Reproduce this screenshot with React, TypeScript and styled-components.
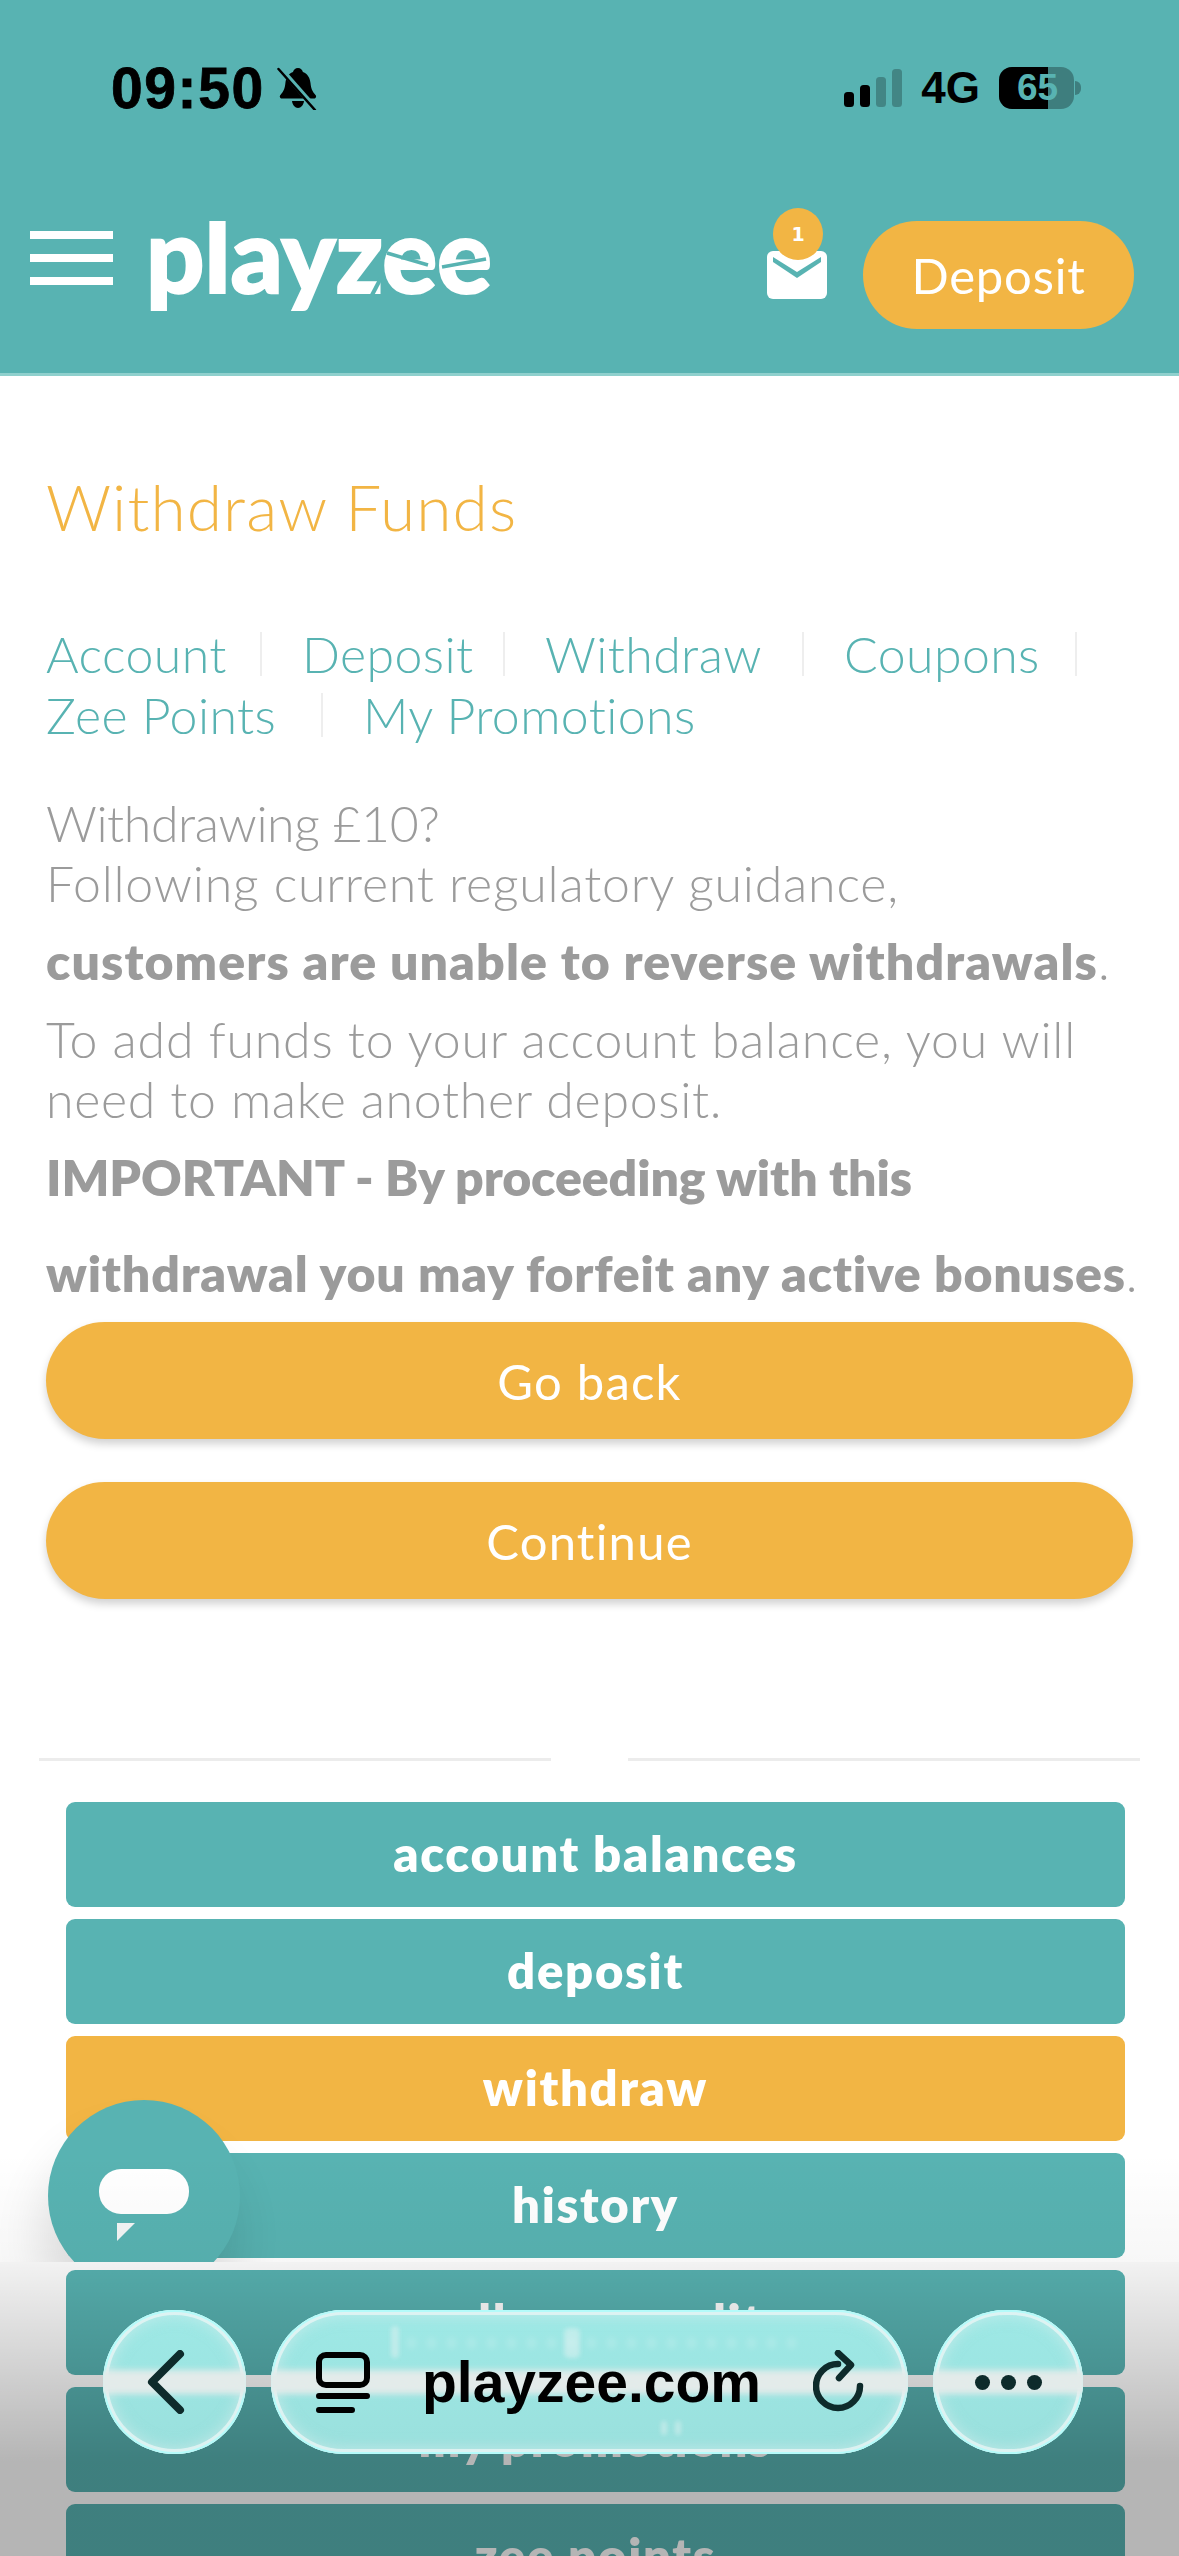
import { Fragment } from "react";
import styled, { createGlobalStyle } from "styled-components";

const teal = "#58b3b2";
const amber = "#f2b544";
const grey = "#9b9b9b";
const ink = "#0e2b2b";
const bodyFont = `"Lato", "Open Sans", sans-serif`;

const GlobalStyle = createGlobalStyle`
  html, body { margin: 0; padding: 0; background: #fff; }
  * { box-sizing: border-box; }
`;

const Page = styled.div`
  position: relative;
  width: 1179px;
  height: 2556px;
  overflow: hidden;
  background: #fff;
  font-family: ${bodyFont};
`;

const Header = styled.header`
  background: ${teal};
  height: 376px;
  border-bottom: 3px solid #8fd0cd;
`;
const StatusBar = styled.div`
  display: flex;
  align-items: center;
  height: 176px;
  padding: 0 98px 0 111px;
`;
const Time = styled.span`
  font-family: "Liberation Sans", sans-serif;
  font-weight: 700;
  font-size: 57px;
  letter-spacing: 1.6px;
  color: #000;
  -webkit-text-stroke: 0.8px #000;
`;
const Spacer = styled.div`
  flex: 1;
`;
const NetworkLabel = styled.span`
  font-family: "Liberation Sans", sans-serif;
  font-weight: 700;
  font-size: 44px;
  color: #000;
  margin: 0 19px;
`;
const Battery = styled.div`
  position: relative;
  display: flex;
  align-items: center;
  justify-content: center;
  width: 75px;
  height: 42px;
  border-radius: 13px;
  overflow: hidden;
  background: #3e7e7e;
  color: ${teal};
  font-family: "Liberation Sans", sans-serif;
  font-weight: 700;
  font-size: 37px;
`;
const BatteryFill = styled.div`
  position: absolute;
  left: 0;
  top: 0;
  bottom: 0;
  width: 49px;
  background: #000;
`;
const BatteryText = styled.span`
  position: relative;
  left: 1px;
`;
const BatteryNub = styled.div`
  width: 6px;
  height: 14px;
  margin-left: 1px;
  border-radius: 0 7px 7px 0;
  background: #3e7e7e;
`;

const NavBar = styled.nav`
  display: flex;
  align-items: flex-start;
  height: 197px;
  padding: 0 45px 0 30px;
`;
const Hamburger = styled.div`
  display: flex;
  flex-direction: column;
  gap: 15px;
  width: 83px;
  margin-top: 55px;
`;
const HamburgerLine = styled.span`
  height: 8px;
  background: #fff;
`;
const Logo = styled.svg`
  margin: 45px 0 0 33px;
`;
const MailLink = styled.div`
  position: relative;
  width: 60px;
  height: 91px;
  margin-top: 32px;
  padding-top: 43px;
`;
const Badge = styled.span`
  position: absolute;
  top: 0;
  left: 6px;
  display: flex;
  align-items: center;
  justify-content: center;
  width: 50px;
  height: 52px;
  border-radius: 50%;
  background: ${amber};
  color: #fff;
  font-family: "DejaVu Sans", sans-serif;
  font-weight: 700;
  font-size: 19px;
`;
const DepositButton = styled.div`
  display: flex;
  align-items: center;
  justify-content: center;
  width: 271px;
  height: 108px;
  margin: 45px 0 0 36px;
  border-radius: 54px;
  background: ${amber};
  color: #fff;
  font-size: 49px;
  letter-spacing: 0.8px;
`;

const Content = styled.main`
  padding: 91px 46px 0;
`;
const Title = styled.h1`
  margin: 0;
  font-size: 64px;
  line-height: 80px;
  font-weight: 300;
  letter-spacing: 1.1px;
  color: ${amber};
`;
const AccountLinks = styled.div`
  margin-top: 76px;
`;
const LinkRow = styled.div`
  display: flex;
  align-items: center;
  height: 61px;
`;
const AccountLink = styled.a<{ $width: number }>`
  width: ${(p) => p.$width}px;
  white-space: nowrap;
  font-size: 50px;
  font-weight: 300;
  letter-spacing: 0.4px;
  color: ${teal};
`;
const LinkDivider = styled.span`
  width: 2px;
  height: 44px;
  margin: 0 40px 0 32px;
  background: #eee;
`;
const Notice = styled.div`
  margin-top: 48px;
  color: ${grey};
  font-size: 50px;
  font-weight: 300;
  line-height: 60px;
`;
const NoticeLine = styled.div<{ $tracking?: number }>`
  white-space: nowrap;
  letter-spacing: ${(p) => p.$tracking ?? 0.8}px;
`;
const BoldLine = styled.div<{ $tracking: number }>`
  white-space: nowrap;
  line-height: 96px;
  strong {
    font-weight: 800;
    letter-spacing: ${(p) => p.$tracking}px;
  }
`;
const ButtonStack = styled.div`
  display: flex;
  flex-direction: column;
  gap: 43px;
  margin-top: 1px;
`;
const PillButton = styled.div`
  display: flex;
  align-items: center;
  justify-content: center;
  height: 117px;
  border-radius: 59px;
  background: ${amber};
  box-shadow: 0 5px 8px rgba(0, 0, 0, 0.18);
  color: #fff;
  font-size: 49px;
  letter-spacing: 1.2px;
`;
const DividerRow = styled.div`
  display: flex;
  justify-content: space-between;
  margin-top: 159px;
  padding: 0 39px;
`;
const Rule = styled.div`
  width: 512px;
  height: 3px;
  background: #ececec;
`;
const SideMenu = styled.div`
  display: flex;
  flex-direction: column;
  gap: 12px;
  margin-top: 41px;
  padding: 0 54px 0 66px;
`;
const MenuItem = styled.div<{ $active?: boolean }>`
  display: flex;
  align-items: center;
  justify-content: center;
  flex: none;
  height: 105px;
  padding-bottom: 3px;
  border-radius: 9px;
  background: ${(p) => (p.$active ? amber : teal)};
  color: #fff;
  font-size: 49px;
  font-weight: 800;
  letter-spacing: 1.7px;
`;

const ChatClip = styled.div`
  position: absolute;
  left: 0;
  top: 2040px;
  width: 340px;
  height: 222px;
  overflow: hidden;
`;
const ChatButton = styled.div`
  position: absolute;
  left: 48px;
  top: 60px;
  display: flex;
  justify-content: center;
  padding-top: 69px;
  width: 192px;
  height: 192px;
  border-radius: 50%;
  background: ${teal};
  box-shadow: -6px 40px 50px rgba(0, 0, 0, 0.12);
`;

const BrowserChrome = styled.div`
  position: absolute;
  left: 0;
  right: 0;
  top: 2262px;
  height: 294px;
  display: flex;
  align-items: flex-start;
  gap: 25px;
  padding: 48px 0 0 103px;
  background: linear-gradient(rgba(0, 0, 0, 0.05), rgba(0, 0, 0, 0.29) 68%);
  &::before {
    content: "";
    position: absolute;
    left: 0;
    right: 0;
    top: -110px;
    height: 110px;
    background: linear-gradient(rgba(0, 0, 0, 0), rgba(0, 0, 0, 0.03));
    pointer-events: none;
  }
`;
const Glass = styled.div<{ $width: number }>`
  position: relative;
  display: flex;
  align-items: center;
  flex: none;
  width: ${(p) => p.$width}px;
  height: 144px;
  border-radius: 72px;
  overflow: hidden;
  background: linear-gradient(#9ee9e6, #9ae0dd);
  box-shadow: inset 0 0 0 2px #b4fbfa, inset 0 0 0 5px rgba(235, 245, 245, 0.75), inset 0 0 14px 6px rgba(225, 240, 240, 0.5);
  &::before {
    content: "";
    position: absolute;
    left: -4px;
    right: -4px;
    top: 60px;
    height: 24px;
    background: #e3ebea;
    filter: blur(3px);
  }
  > * {
    position: relative;
  }
`;
const BackGlass = styled(Glass)`
  justify-content: center;
  padding-right: 14px;
`;
const AddressGlass = styled(Glass)`
  padding: 0 41px 0 45px;
`;
const MoreGlass = styled(Glass)`
  justify-content: center;
  gap: 11px;
`;
const GhostLine = styled.div`
  position: absolute !important;
  left: 136px;
  right: 112px;
  top: 28px;
  height: 10px;
  background: repeating-linear-gradient(90deg, rgba(255, 255, 255, 0.16) 0 9px, transparent 9px 20px);
  filter: blur(3px);
`;
const GhostMark = styled.div<{ $x: number; $y: number; $w: number; $h: number }>`
  position: absolute !important;
  left: ${(p) => p.$x}px;
  top: ${(p) => p.$y}px;
  width: ${(p) => p.$w}px;
  height: ${(p) => p.$h}px;
  background: rgba(235, 245, 245, 0.45);
  border-radius: 5px;
  filter: blur(2px);
`;
const Address = styled.span`
  flex: 1;
  text-align: center;
  font-family: "Liberation Sans", sans-serif;
  font-weight: 700;
  font-size: 57px;
  color: #000;
`;
const Dot = styled.span`
  width: 15px;
  height: 15px;
  border-radius: 50%;
  background: ${ink};
`;

const accountLinks = [
  [
    { label: "Account", width: 182 },
    { label: "Deposit", width: 169 },
    { label: "Withdraw", width: 225 },
    { label: "Coupons", width: 199 },
  ],
  [
    { label: "Zee Points", width: 243 },
    { label: "My Promotions", width: 400 },
  ],
];

const menu = ["account balances", "deposit", "withdraw", "history", "rollover credit", "my promotions", "zee points"];

export default function App() {
  return (
    <Page>
      <GlobalStyle />
      <Header>
        <StatusBar>
          <Time>09:50</Time>
          <svg width="41" height="43" viewBox="0 0 41 43" style={{ marginLeft: 12 }}>
            <path d="M21 1c2.600 0 4.400 1.800 4.900 4 5 2 7 6 7.600 11 .5 5 1.500 8 5 12 1.300 1.500.4 3.500-1.600 3.500H5c-2 0-2.900-2-1.600-3.500 3.500-4 4.500-7 5-12 .6-5 2.600-9 7.600-11 .5-2.200 2.300-4 5-4z" />
            <path d="M15 34h12c-.5 4-3 7-6 7s-5.500-3-6-7z" />
            <path d="M3 1l36 41" stroke={teal} strokeWidth="5" />
            <path d="M1.500 2l36.500 41" stroke="#000" strokeWidth="2.500" strokeLinecap="round" />
          </svg>
          <Spacer />
          <svg width="58" height="38" viewBox="0 0 58 38">
            <rect x="0" y="23" width="10" height="15" rx="3.500" />
            <rect x="16" y="16" width="10" height="22" rx="3.500" />
            <rect x="32" y="8" width="10" height="30" rx="3.500" opacity="0.25" />
            <rect x="48" y="0" width="10" height="38" rx="3.500" opacity="0.25" />
          </svg>
          <NetworkLabel>4G</NetworkLabel>
          <Battery>
            <BatteryFill />
            <BatteryText>65</BatteryText>
          </Battery>
          <BatteryNub />
        </StatusBar>
        <NavBar>
          <Hamburger>
            <HamburgerLine />
            <HamburgerLine />
            <HamburgerLine />
          </Hamburger>
          <Logo width="346" height="93" viewBox="0 0 346 93">
            <text x="0" y="72" fontFamily="Lato, sans-serif" fontWeight="900" fontSize="102" fill="#fff" stroke="#fff" strokeWidth="2" textLength="346" lengthAdjust="spacingAndGlyphs">
              playzee
            </text>
            <path d="M226 74l9-17" stroke={teal} strokeWidth="4" />
            <path d="M241 32l41 12" stroke={teal} strokeWidth="3.500" />
            <path d="M296 46l44-8" stroke={teal} strokeWidth="3.500" />
          </Logo>
          <Spacer />
          <MailLink>
            <Badge>1</Badge>
            <svg width="60" height="48" viewBox="0 0 60 48">
              <rect width="60" height="48" rx="6" fill="#fff" />
              <path d="M6 6l24 15 24-15v5L30 27 6 11z" fill={teal} />
            </svg>
          </MailLink>
          <DepositButton>Deposit</DepositButton>
        </NavBar>
      </Header>
      <Content>
        <Title>Withdraw Funds</Title>
        <AccountLinks>
          {accountLinks.map((row) => (
            <LinkRow key={row[0].label}>
              {row.map((link, i) => (
                <Fragment key={link.label}>
                  <AccountLink $width={link.width}>{link.label}</AccountLink>
                  {(row.length === 4 || i === 0) && <LinkDivider />}
                </Fragment>
              ))}
            </LinkRow>
          ))}
        </AccountLinks>
        <Notice>
          <NoticeLine $tracking={-0.4}>Withdrawing £10?</NoticeLine>
          <NoticeLine>Following current regulatory guidance,</NoticeLine>
          <BoldLine $tracking={1.1}>
            <strong>customers are unable to reverse withdrawals</strong>.
          </BoldLine>
          <NoticeLine>To add funds to your account balance, you will</NoticeLine>
          <NoticeLine $tracking={0.7}>need to make another deposit.</NoticeLine>
          <BoldLine $tracking={-0.1}>
            <strong>IMPORTANT - By proceeding with this</strong>
          </BoldLine>
          <BoldLine $tracking={0.8}>
            <strong>withdrawal you may forfeit any active bonuses</strong>.
          </BoldLine>
        </Notice>
        <ButtonStack>
          <PillButton>Go back</PillButton>
          <PillButton>Continue</PillButton>
        </ButtonStack>
      </Content>
      <DividerRow>
        <Rule />
        <Rule />
      </DividerRow>
      <SideMenu>
        {menu.map((item) => (
          <MenuItem key={item} $active={item === "withdraw"}>
            {item}
          </MenuItem>
        ))}
      </SideMenu>
      <ChatClip>
        <ChatButton>
          <svg width="90" height="72" viewBox="0 0 90 72">
            <rect width="90" height="45" rx="22" fill="#fff" />
            <path d="M18 54h18L18 72z" fill="#f4f6f6" />
          </svg>
        </ChatButton>
      </ChatClip>
      <BrowserChrome>
        <BackGlass $width={143}>
          <svg width="41" height="64" viewBox="0 0 41 64" fill="none" stroke={ink} strokeWidth="8" strokeLinecap="round" strokeLinejoin="round">
            <path d="M33 4L5 32l28 28" />
          </svg>
        </BackGlass>
        <AddressGlass $width={637}>
          <GhostLine />
          <GhostMark $x={120} $y={16} $w={8} $h={32} />
          <GhostMark $x={293} $y={18} $w={16} $h={30} />
          <GhostMark $x={390} $y={111} $w={6} $h={14} />
          <GhostMark $x={404} $y={111} $w={6} $h={14} />
          <svg width="54" height="61" viewBox="0 0 54 61" fill="none" stroke="#000" strokeWidth="6" strokeLinecap="round">
            <rect x="3" y="3" width="48" height="30" rx="7" />
            <path d="M3 44h48M3 58h33" />
          </svg>
          <Address>playzee.com</Address>
          <svg width="54" height="64" viewBox="0 0 54 64" fill="none" stroke={ink} strokeWidth="6.500" strokeLinecap="round" strokeLinejoin="round">
            <path d="M25 14A22 22 0 1 0 47 36" />
            <path d="M25 3l13 12-12 13" />
          </svg>
        </AddressGlass>
        <MoreGlass $width={150}>
          <Dot />
          <Dot />
          <Dot />
        </MoreGlass>
      </BrowserChrome>
    </Page>
  );
}
